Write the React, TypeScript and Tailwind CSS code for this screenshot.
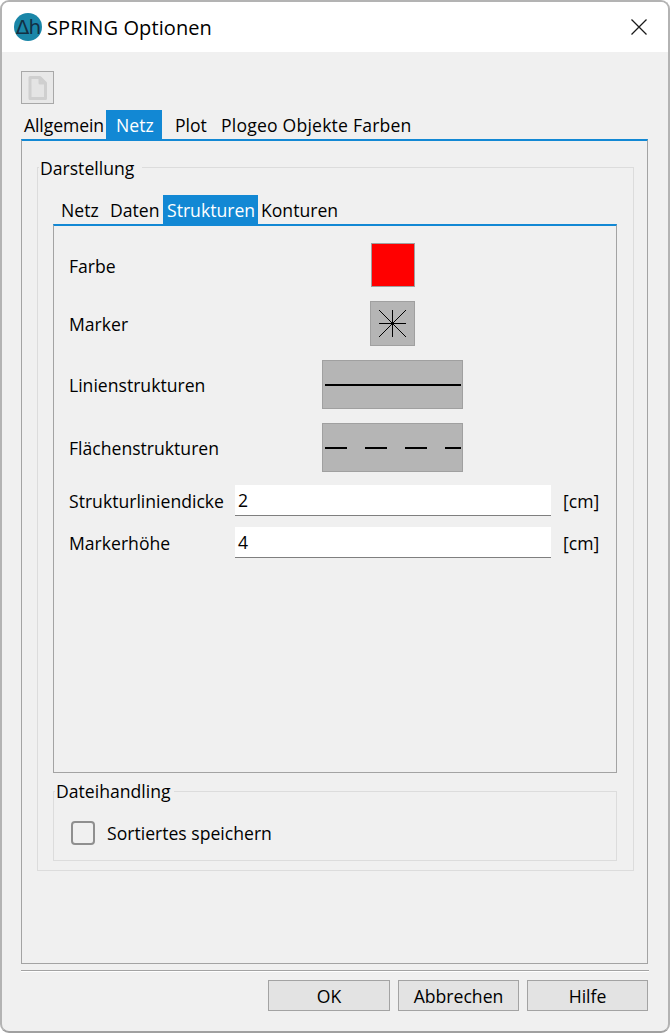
import React from "react";

function Tab({ label, w, pl, active, extra }: { label: string; w: string; pl: string; active?: boolean; extra?: string }) {
  return (
    <div className={`${w} ${pl} ${extra ?? ""} h-full flex items-center whitespace-nowrap ${active ? "bg-[#1288d4] text-white" : "text-black"}`}>
      {label}
    </div>
  );
}

function Btn({ label, w }: { label: string; w: string }) {
  return (
    <div className={`${w} h-[31px] bg-[#e3e3e3] border border-[#a3a3a3] flex items-center justify-center text-black`}>
      {label}
    </div>
  );
}

function Field({ label, value, mt }: { label: string; value: string; mt: string }) {
  return (
    <div className={`flex items-center h-[31px] ${mt}`}>
      <div className="w-[166px] whitespace-nowrap">{label}</div>
      <div className="w-[316px] h-full bg-white border-b border-[#7f7f7f] pl-[3px] flex items-center">{value}</div>
      <div className="ml-[12px] whitespace-nowrap">[cm]</div>
    </div>
  );
}

function SwatchRow({ label, mt, h, labelPt, children }: { label: string; mt: string; h: string; labelPt?: string; children: React.ReactNode }) {
  return (
    <div className={`flex items-center ${h} ${mt}`}>
      <div className={`w-[253px] ${labelPt ?? ""} whitespace-nowrap`}>{label}</div>
      <div className="w-[141px] flex justify-center">{children}</div>
    </div>
  );
}

export default function App() {
  return (
    <div className="w-[670px] h-[1033px] bg-white font-['Open_Sans','Noto_Sans',sans-serif] text-[17.6px] leading-[24px] text-black overflow-hidden">
      <div className="w-full h-full rounded-[9px] border-2 border-[#b3b3b3] border-b-[#a0a0a0] bg-[#f0f0f0] overflow-hidden flex flex-col">
        {/* Title bar */}
        <div className="h-[50px] bg-white flex items-center shrink-0 pl-[12px] pr-[21px]">
          <div className="w-[28px] h-[28px] rounded-full bg-[#1a86a8] flex items-center justify-center text-[#123044] text-[20px] leading-none font-['DejaVu_Sans',sans-serif] tracking-[-1px]">
            Δh
          </div>
          <div className="ml-[5px] pt-[2px] text-[20px] tracking-[0.1px]">SPRING Optionen</div>
          <svg className="ml-auto" width="16" height="16" viewBox="0 0 16 16">
            <path d="M0.5 0.5 L15.5 15.5 M15.5 0.5 L0.5 15.5" stroke="#1a1a1a" strokeWidth="1.3" fill="none" />
          </svg>
        </div>

        {/* Body */}
        <div className="flex-1 flex flex-col pl-[19px] pr-[20px]">
          {/* toolbar */}
          <div className="mt-[19px] w-[33px] h-[33px] border border-[#a8a8a8] bg-[#e8e8e8] flex items-center justify-center shrink-0">
            <svg width="19" height="24" viewBox="0 0 19 24">
              <path d="M2 1.5 H12 L17.5 7 V22.5 H2 Z M12 1.5 V7 H17.5" fill="#e4e4e4" stroke="#cfcfcf" strokeWidth="3" strokeLinejoin="round" />
            </svg>
          </div>

          {/* top tabs */}
          <div className="mt-[6px] h-[29px] flex shrink-0">
            <Tab label="Allgemein" w="w-[85px]" pl="pl-[3px]" extra="tracking-[-0.1px]" />
            <Tab label="Netz" w="w-[56px]" pl="pl-[10px]" active />
            <Tab label="Plot" w="w-[56px]" pl="pl-[13px]" />
            <Tab label="Plogeo Objekte Farben" w="w-[210px]" pl="pl-[3px]" extra="tracking-[0.2px]" />
          </div>

          {/* top pane */}
          <div className="h-[825px] border-t-2 border-t-[#1288d4] border-l border-r border-b border-l-[#a3a3a3] border-r-[#a3a3a3] border-b-[#a3a3a3] pl-[15px] pr-[15px] shrink-0">
            {/* Darstellung group */}
            <div className="relative mt-[26px] h-[704px] w-[597px] border border-[#dcdcdc] pl-[15px] pr-[15px]">
              <div className="absolute left-[1px] top-[-12px] bg-[#f0f0f0] pl-[1px] pr-[8px] leading-[24px] whitespace-nowrap">Darstellung</div>

              {/* inner tabs */}
              <div className="mt-[27px] h-[29px] flex">
                <Tab label="Netz" w="w-[54px]" pl="pl-[8px]" />
                <Tab label="Daten" w="w-[56px]" pl="pl-[3px]" />
                <Tab label="Strukturen" w="w-[95px]" pl="pl-[4px]" active />
                <Tab label="Konturen" w="w-[90px]" pl="pl-[3px]" />
              </div>

              {/* inner pane */}
              <div className="w-[564px] h-[549px] border-t-2 border-t-[#1288d4] border-l border-r border-b border-l-[#a3a3a3] border-r-[#a3a3a3] border-b-[#a3a3a3] pl-[15px] pt-[17px]">
                <SwatchRow label="Farbe" mt="mt-0" h="h-[44px]" labelPt="pt-[2px]">
                  <div className="w-[44px] h-[44px] bg-[#ff0000] border border-[#a0a0a0]" />
                </SwatchRow>
                <SwatchRow label="Marker" mt="mt-[14px]" h="h-[45px]">
                  <div className="w-[45px] h-[45px] bg-[#b5b5b5] border border-[#a0a0a0] flex items-center justify-center">
                    <svg width="27" height="27" viewBox="0 0 27 27" shapeRendering="crispEdges">
                      <path d="M13.5 0 V27 M0 13.5 H27 M0 0 L27 27 M27 0 L0 27" stroke="#000" strokeWidth="1" fill="none" />
                      <rect x="12" y="12" width="3" height="3" fill="#000" />
                    </svg>
                  </div>
                </SwatchRow>
                <SwatchRow label="Linienstrukturen" mt="mt-[14px]" h="h-[49px]">
                  <div className="w-[141px] h-[49px] bg-[#b5b5b5] border border-[#a0a0a0] flex items-center">
                    <svg width="139" height="47" viewBox="0 0 139 47" shapeRendering="crispEdges">
                      <path d="M2 23.5 H138" stroke="#000" strokeWidth="2" fill="none" />
                    </svg>
                  </div>
                </SwatchRow>
                <SwatchRow label="Flächenstrukturen" mt="mt-[14px]" h="h-[49px]">
                  <div className="w-[141px] h-[49px] bg-[#b5b5b5] border border-[#a0a0a0] flex items-center">
                    <svg width="139" height="47" viewBox="0 0 139 47" shapeRendering="crispEdges">
                      <path d="M2 23.5 H24 M42 23.5 H64 M82 23.5 H104 M122 23.5 H138" stroke="#000" strokeWidth="2" fill="none" />
                    </svg>
                  </div>
                </SwatchRow>
                <Field label="Strukturliniendicke" value="2" mt="mt-[13px]" />
                <Field label="Markerhöhe" value="4" mt="mt-[11px]" />
              </div>

              {/* Dateihandling group */}
              <div className="relative mt-[18px] w-[564px] h-[70px] border border-[#dcdcdc]">
                <div className="absolute left-[1px] top-[-13px] h-[25px] bg-[#f0f0f0] pl-[1px] pr-[4px] leading-[24px] whitespace-nowrap">Dateihandling</div>
                <div className="flex items-center pt-[29px] pl-[17px]">
                  <div className="w-[24px] h-[24px] rounded-[4px] border-2 border-[#8f8f8f] bg-[#f0f0f0]" />
                  <div className="ml-[12px] whitespace-nowrap">Sortiertes speichern</div>
                </div>
              </div>
            </div>
          </div>

          {/* separator */}
          <div className="mt-[6px] h-[2px] bg-[#a3a3a3] border-b border-white w-[628px] shrink-0" />
          {/* buttons */}
          <div className="mt-[8px] flex justify-end gap-[8px] pr-[1px] w-[628px] shrink-0">
            <Btn label="OK" w="w-[122px]" />
            <Btn label="Abbrechen" w="w-[121px]" />
            <Btn label="Hilfe" w="w-[121px]" />
          </div>
        </div>
      </div>
    </div>
  );
}
